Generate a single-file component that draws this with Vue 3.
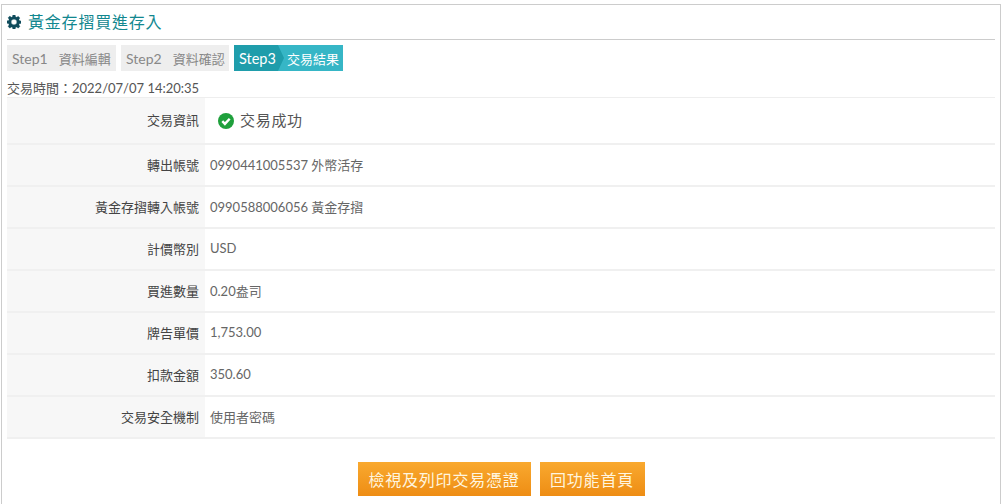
<template>
  <div class="page">
    <div class="panel">
      <h1 class="title">
        <svg class="gear" viewBox="0 0 16 16" width="14" height="14">
          <path
            fill="#0f4c5c"
            stroke="#0f4c5c"
            stroke-width="0.3"
            stroke-linejoin="round"
            fill-rule="evenodd"
            d="M6.6 0h2.8l.4 2.1 1.2.5L12.8 1.400l2 2-1.200 1.800.5 1.200 1.900.400v2.800l-1.900.4-.5 1.200 1.200 1.800-2 2-1.800-1.200-1.200.5-.4 1.900H6.600l-.4-1.900-1.200-.5-1.800 1.200-2-2 1.200-1.800-.5-1.200L0 9.400V6.600l1.900-.4.500-1.200-1.200-1.800 2-2L5 2.600l1.200-.5zM8 4.800a3.200 3.200 0 1 0 0 6.400 3.200 3.200 0 0 0 0-6.400z"
          />
        </svg>
        黃金存摺買進存入
      </h1>

      <div class="steps">
        <div v-for="s in steps" :key="s.no" :class="['step', { active: s.active }]">
          <span class="step-no">{{ s.no }}</span>
          <span class="step-name">{{ s.name }}</span>
        </div>
      </div>

      <div class="time">交易時間：2022/07/07 14:20:35</div>

      <div class="rows">
        <div class="row first">
          <div class="label">交易資訊</div>
          <div class="value status">
            <svg class="ok" viewBox="0 0 16 16" width="16" height="16">
              <circle cx="8" cy="8" r="8" fill="#1fa03c" />
              <path d="M4.300 8.200l2.600 2.700 4.800-5.200" fill="none" stroke="#fff" stroke-width="2.400" />
            </svg>
            交易成功
          </div>
        </div>
        <div v-for="r in rows" :key="r.label" class="row">
          <div class="label">{{ r.label }}</div>
          <div class="value">{{ r.value }}</div>
        </div>
      </div>

      <div class="actions">
        <button class="btn wide">檢視及列印交易憑證</button>
        <button class="btn">回功能首頁</button>
      </div>
    </div>
  </div>
</template>

<script setup>
const steps = [
  { no: 'Step1', name: '資料編輯' },
  { no: 'Step2', name: '資料確認' },
  { no: 'Step3', name: '交易結果', active: true },
]

const rows = [
  { label: '轉出帳號', value: '0990441005537 外幣活存' },
  { label: '黃金存摺轉入帳號', value: '0990588006056 黃金存摺' },
  { label: '計價幣別', value: 'USD' },
  { label: '買進數量', value: '0.20盎司' },
  { label: '牌告單價', value: '1,753.00' },
  { label: '扣款金額', value: '350.60' },
  { label: '交易安全機制', value: '使用者密碼' },
]
</script>

<style>
html,
body {
  margin: 0;
  background: #fff;
  overflow: hidden;
}
</style>

<style scoped>
.page {
  height: 504px;
  padding: 4px 4px 0 1px;
  box-sizing: border-box;
  font-family: Lato, "Noto Sans CJK TC", sans-serif;
  color: #444;
  overflow: hidden;
}

.panel {
  border: 1px solid #ccc;
  border-bottom: none;
  padding: 0 5px;
  height: 500px;
  box-sizing: border-box;
}

.title {
  display: flex;
  align-items: center;
  gap: 7px;
  margin: 0;
  height: 35px;
  padding: 0 0 2px;
  box-sizing: border-box;
  border-bottom: 1px solid #ccc;
  font-size: 16px;
  font-weight: 400;
  letter-spacing: 0.8px;
  color: #12878f;
}

.gear {
  margin-top: 2px;
}

.steps {
  display: flex;
  gap: 5px;
  margin-top: 5px;
}

.step {
  display: flex;
  align-items: center;
  height: 26px;
  width: 109px;
  box-sizing: border-box;
  padding-left: 5px;
  background: #eee;
  color: #888;
  font-size: 14px;
  white-space: nowrap;
}

.step:nth-child(2) {
  width: 108px;
}

.step-name {
  margin-left: 11px;
  font-size: 13px;
}

.step.active {
  position: relative;
  background: #36b6c6;
  color: #fff;
}

.step.active .step-no {
  position: relative;
  z-index: 1;
  font-size: 14.5px;
}

.step.active .step-name {
  position: relative;
  z-index: 1;
  margin-left: 11px;
}

.step.active::before {
  content: "";
  position: absolute;
  left: 0;
  top: 0;
  width: 50px;
  height: 26px;
  background: #1f9dab;
  clip-path: polygon(0 0, 44px 0, 50px 13px, 44px 26px, 0 26px);
}

.time {
  height: 27px;
  padding-top: 6px;
  line-height: 22px;
  box-sizing: border-box;
  border-bottom: 1px solid #eee;
  font-size: 13px;
  color: #555;
}

.row {
  display: flex;
  height: 42px;
  box-sizing: border-box;
  border-bottom: 2px solid #f0f0f0;
  align-items: stretch;
}

.row.first {
  height: 47px;
}

.label {
  display: flex;
  align-items: center;
  justify-content: flex-end;
  width: 198px;
  padding: 0 6px 2px 0;
  box-sizing: border-box;
  background: #f7f7f7;
  font-size: 13px;
  color: #444;
}

.value {
  display: flex;
  align-items: center;
  padding: 0 0 2px 5px;
  font-size: 13px;
  color: #666;
}

.status {
  gap: 6px;
  padding-left: 13px;
  font-size: 15px;
  letter-spacing: 0.7px;
  color: #555;
}

.ok {
  margin-top: 3px;
}

.actions {
  display: flex;
  justify-content: center;
  gap: 9px;
  margin-top: 23px;
}

.btn {
  height: 34px;
  width: 105px;
  padding: 0;
  border: none;
  background: linear-gradient(#f9a92f, #ee8d14);
  color: #fff5df;
  font-family: inherit;
  font-size: 16px;
  letter-spacing: 0.8px;
}

.btn.wide {
  width: 173px;
}
</style>
